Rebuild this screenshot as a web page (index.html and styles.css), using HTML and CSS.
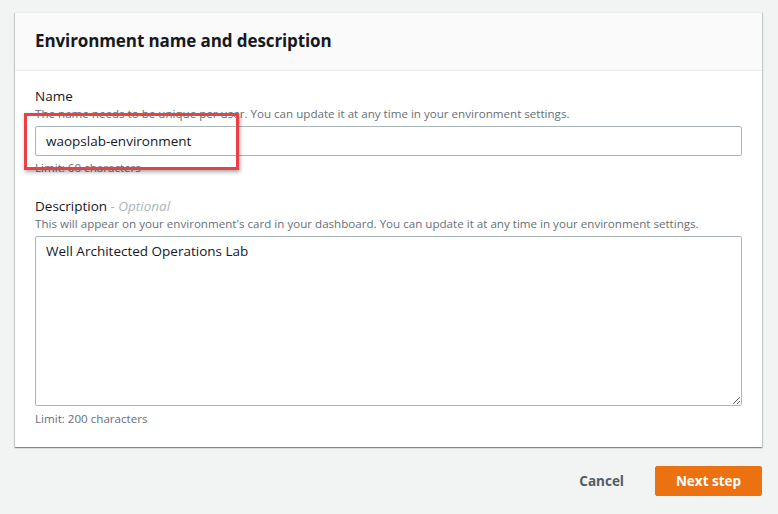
FILE: index.html
```html
<!DOCTYPE html>
<html>
<head>
<meta charset="utf-8">
<link rel="stylesheet" href="styles.css">
</head>
<body>
<div class="page">
  <div class="card">
    <div class="card-header">
      <h2 class="title">Environment name and description</h2>
    </div>
    <div class="card-body">
      <div class="field field-name">
        <div class="label">Name</div>
        <div class="hint">The name needs to be unique per user. You can update it at any time in your environment settings.</div>
        <div class="control">
          <input class="input" type="text" value="waopslab-environment">
        </div>
        <div class="limit">Limit: 60 characters</div>
        <div class="highlight"></div>
      </div>
      <div class="field field-desc">
        <div class="label">Description <span class="optional">- Optional</span></div>
        <div class="hint">This will appear on your environment's card in your dashboard. You can update it at any time in your environment settings.</div>
        <div class="control">
          <textarea class="textarea">Well Architected Operations Lab</textarea>
        </div>
        <div class="limit limit-desc">Limit: 200 characters</div>
      </div>
    </div>
  </div>
  <div class="actions">
    <button class="btn-link">Cancel</button>
    <button class="btn-primary">Next step</button>
  </div>
</div>
</body>
</html>
```

FILE: styles.css
```css
* { box-sizing: border-box; }
html, body {
  margin: 0;
  padding: 0;
  background: #f2f3f3;
  font-family: "Open Sans", "Liberation Sans", sans-serif;
  color: #16191f;
}
.page {
  width: 778px;
  height: 514px;
  padding: 12px 16px 0 15px;
}
.card {
  width: 747px;
  background: #fff;
  border-top: 1px solid #eaeded;
  box-shadow: 0 1px 1px 0 rgba(0,28,36,.3), 1px 1px 1px 0 rgba(0,28,36,.15), -1px 1px 1px 0 rgba(0,28,36,.15);
}
.card-header {
  background: #fafafa;
  border-bottom: 1px solid #eaeded;
  height: 58px;
  padding: 0 20px 3px 20px;
  display: flex;
  align-items: center;
}
.title {
  margin: 0;
  font-size: 17px;
  font-weight: 700;
  color: #16191f;
  letter-spacing: -0.1px;
}
.card-body {
  padding: 16px 20px 20px 20px;
}
.field { position: relative; }
.field-desc { margin-top: 21px; }
.label {
  font-size: 13.5px;
  line-height: 19px;
  color: #16191f;
}
.optional {
  font-style: italic;
  color: #aab7b8;
}
.hint {
  font-size: 11.6px;
  line-height: 16px;
  color: #687078;
  white-space: nowrap;
}
.control { margin-top: 4px; }
.input {
  display: block;
  width: 707px;
  height: 30px;
  border: 1px solid #aab7b8;
  border-radius: 2px;
  padding: 0 10px;
  font-family: inherit;
  font-size: 13.5px;
  color: #16191f;
  background: #fff;
}
.textarea {
  display: block;
  width: 707px;
  height: 170px;
  border: 1px solid #aab7b8;
  border-radius: 2px;
  padding: 4px 10px;
  font-family: inherit;
  font-size: 13.5px;
  line-height: 20px;
  color: #16191f;
  resize: vertical;
}
.limit {
  font-size: 11.6px;
  line-height: 16px;
  color: #687078;
  margin-top: 4px;
}
.limit-desc { margin-top: 5px; }
.highlight {
  position: absolute;
  left: -11px;
  top: 26px;
  width: 215px;
  height: 57px;
  border: 3px solid #ea3f45;
  box-shadow: 1px 2px 4px rgba(0,0,0,.35);
}
.actions {
  display: flex;
  justify-content: flex-end;
  align-items: center;
  gap: 20px;
  margin-top: 19px;
  width: 747px;
}
.btn-link {
  background: none;
  border: none;
  font-family: inherit;
  font-size: 13.5px;
  font-weight: 700;
  color: #545b64;
  padding: 6px 11px 6px 10px;
}
.btn-primary {
  background: #ec7211;
  border: 1px solid #ec7211;
  border-radius: 2px;
  color: #fff;
  font-family: inherit;
  font-size: 13.5px;
  font-weight: 700;
  width: 107px;
  height: 30px;
  padding: 0;
}
```
